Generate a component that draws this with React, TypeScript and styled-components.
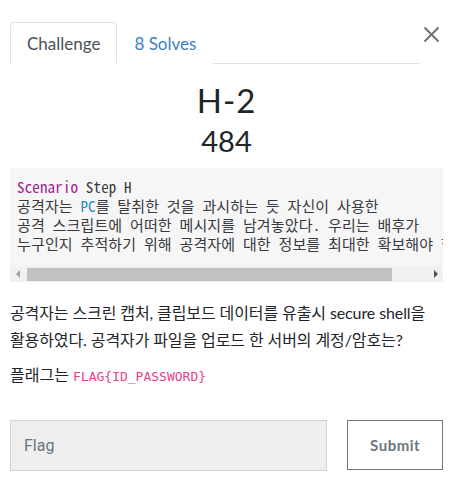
import React from "react";
import styled, { createGlobalStyle } from "styled-components";

const Global = createGlobalStyle`
  html, body { margin: 0; padding: 0; background: #fff; }
  body { font-family: Lato, "Noto Sans CJK KR", sans-serif; color: #212529; }
`;

const Page = styled.div`
  width: 433px;
  padding: 22px 0 0 10px;
`;

const Header = styled.div`
  display: flex;
  align-items: flex-start;
`;

const Tabs = styled.div`
  flex: 0 0 410px;
  display: flex;
  border-bottom: 1px solid #dee2e6;
`;

const Tab = styled.div<{ $active?: boolean }>`
  box-sizing: border-box;
  padding: 0 16px;
  display: flex;
  align-items: center;
  font-size: 17px;
  margin-bottom: -1px;
  height: 42px;
  color: ${(p) => (p.$active ? "#495057" : "#3c7fc4")};
  background: #fff;
  border: 1px solid ${(p) => (p.$active ? "#dee2e6" : "transparent")};
  border-bottom-color: ${(p) => (p.$active ? "#fff" : "transparent")};
  border-radius: 4px 4px 0 0;
`;

const Close = styled.button`
  margin: 2px 0 0 1px;
  width: 20px;
  height: 20px;
  padding: 0;
  border: 0;
  background: none;
  display: flex;
  align-items: center;
  justify-content: center;
`;

const Title = styled.h2`
  margin: 16px 0 0;
  text-align: center;
  font-weight: 400;
  font-size: 33px;
  line-height: 40px;
  letter-spacing: 1px;
  color: #212529;
`;

const Points = styled.h3`
  margin: 4px 0 0;
  text-align: center;
  font-weight: 400;
  font-size: 29px;
  line-height: 34px;
  color: #212529;
`;

const CodeBox = styled.div`
  margin-top: 10px;
  background: #f6f6f6;
`;

const Code = styled.pre`
  margin: 0;
  padding: 9px 0 13px 7px;
  overflow: hidden;
  white-space: pre;
  font-family: "Noto Sans Mono CJK KR", "DejaVu Sans Mono", "Noto Sans CJK KR", monospace;
  font-size: 15px;
  letter-spacing: 0.15px;
  line-height: 19px;
  color: #383a42;
`;

const Kw = styled.span<{ $c: string }>`
  color: ${(p) => p.$c};
`;

const ScrollBar = styled.div`
  height: 16px;
  display: flex;
  align-items: center;
  background: #f1f1f1;
`;

const Arrow = styled.div<{ $dir: "l" | "r" }>`
  width: 15px;
  height: 16px;
  display: flex;
  align-items: center;
  justify-content: center;
  &::before {
    content: "";
    border-top: 4px solid transparent;
    border-bottom: 4px solid transparent;
    ${(p) => (p.$dir === "l" ? "border-right: 4px solid #a3a3a3;" : "border-left: 4px solid #505050;")}
  }
`;

const Track = styled.div`
  flex: 1;
  height: 14px;
  display: flex;
  align-items: center;
`;

const Thumb = styled.div`
  width: 365px;
  height: 13px;
  margin-left: 2px;
  background: #c1c1c1;
`;

const Para = styled.p`
  margin: 17px 0 0;
  font-size: 16px;
  line-height: 27px;
  color: #212529;
  letter-spacing: -0.1px;
`;

const FlagLine = styled.p`
  margin: 10px 0 0;
  font-size: 16px;
  line-height: 24px;
  color: #212529;
`;

const Pink = styled.code`
  font-family: "DejaVu Sans Mono", monospace;
  font-size: 13px;
  color: #e83e8c;
`;

const Form = styled.div`
  margin-top: 31px;
  display: flex;
  gap: 20px;
  align-items: flex-start;
`;

const Input = styled.input`
  width: 318px;
  height: 51px;
  box-sizing: border-box;
  border: 1px solid #ced4da;
  background: #efefef;
  padding: 0 13px;
  font-family: Roboto, sans-serif;
  font-size: 16px;
  color: #495057;
  outline: none;
  &::placeholder { color: #6c757d; }
`;

const Submit = styled.button`
  width: 96px;
  height: 50px;
  box-sizing: border-box;
  border: 1px solid #6c757d;
  background: #fff;
  color: #6c757d;
  font-family: Lato, sans-serif;
  font-weight: 700;
  font-size: 15px;
  letter-spacing: 0.5px;
`;

export default function App() {
  return (
    <>
      <Global />
      <Page>
        <Header>
          <Tabs>
            <Tab $active>Challenge</Tab>
            <Tab>8 Solves</Tab>
          </Tabs>
          <Close aria-label="Close">
            <svg width="17" height="17" viewBox="0 0 17 17">
              <path d="M1.5 1.5 L15.5 15.5 M15.5 1.5 L1.5 15.5" stroke="#737373" strokeWidth="2" fill="none" />
            </svg>
          </Close>
        </Header>
        <Title>H-2</Title>
        <Points>484</Points>
        <CodeBox>
          <Code>
            <Kw $c="#a0208e">Scenario</Kw> Step H{"\n"}
            공격자는 <Kw $c="#1c8dc4">PC</Kw>를 탈취한 것을 과시하는 듯 자신이 사용한{"\n"}
            공격 스크립트에 어떠한 메시지를 남겨놓았다. 우리는 배후가{"\n"}
            누구인지 추적하기 위해 공격자에 대한 정보를 최대한 확보해야 한다.
          </Code>
          <ScrollBar>
            <Arrow $dir="l" />
            <Track>
              <Thumb />
            </Track>
            <Arrow $dir="r" />
          </ScrollBar>
        </CodeBox>
        <Para>
          공격자는 스크린 캡처, 클립보드 데이터를 유출시 secure shell을 활용하였다. 공격자가 파일을 업로드 한 서버의 계정/암호는?
        </Para>
        <FlagLine>
          플래그는 <Pink>FLAG{"{"}ID_PASSWORD{"}"}</Pink>
        </FlagLine>
        <Form>
          <Input placeholder="Flag" />
          <Submit>Submit</Submit>
        </Form>
      </Page>
    </>
  );
}
